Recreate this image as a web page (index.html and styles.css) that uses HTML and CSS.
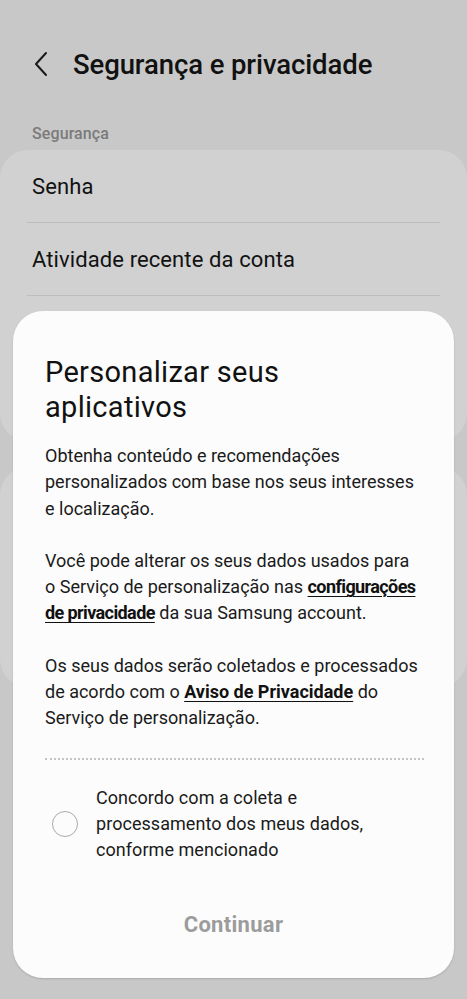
FILE: index.html
```html
<!DOCTYPE html>
<html lang="pt-BR">
<head>
    <meta charset="UTF-8">
    <meta name="viewport" content="width=device-width, initial-scale=1.0">
    <title>Segurança e privacidade</title>
    <link rel="stylesheet" href="styles.css">
</head>
<body>
    <div class="screen">
        <header class="app-bar">
            <svg class="back" width="14" height="26" viewBox="0 0 14 26">
                <path d="M12 2 L2 13 L12 24" fill="none" stroke="#1a1a1a" stroke-width="2" stroke-linecap="round" stroke-linejoin="round"/>
            </svg>
            <h1>Segurança e privacidade</h1>
        </header>

        <div class="section-label">Segurança</div>
        <div class="card">
            <div class="row">Senha</div>
            <div class="row">Atividade recente da conta</div>
            <div class="row">Verificação em duas etapas</div>
            <div class="row">Dispositivos</div>
        </div>
        <div class="card card-second">
            <div class="row">Personalização</div>
            <div class="row">Dados</div>
        </div>

        <div class="sheet">
            <h2>Personalizar seus aplicativos</h2>
            <p>Obtenha conteúdo e recomendações personalizados com base nos seus interesses e localização.</p>
            <p>Você pode alterar os seus dados usados para o Serviço de personalização nas <a href="#">configurações de privacidade</a> da sua Samsung account.</p>
            <p>Os seus dados serão coletados e processados de acordo com o <a href="#" class="wide">Aviso de Privacidade</a> do Serviço de personalização.</p>
            <div class="dots"></div>
            <label class="agree">
                <span class="radio"></span>
                <span class="agree-text">Concordo com a coleta e processamento dos meus dados, conforme mencionado</span>
            </label>
            <button class="continue" type="button">Continuar</button>
        </div>
    </div>
</body>
</html>
```

FILE: styles.css
```css
body {
    margin: 0;
    background-color: #c8c8c8;
    font-family: Roboto, "Noto Sans", sans-serif;
    color: #111;
}

.screen {
    position: relative;
    width: 467px;
    height: 999px;
    overflow: hidden;
}

.app-bar {
    display: flex;
    align-items: center;
    gap: 25px;
    padding: 49px 0 0 34px;
    height: 30px;
}

.back {
    display: block;
}

h1 {
    margin: 0;
    font-size: 27.5px;
    font-weight: 500;
    letter-spacing: -0.1px;
    color: #111;
}

.section-label {
    margin: 45px 0 0 32px;
    font-size: 16px;
    font-weight: 500;
    letter-spacing: 0.1px;
    color: #7b7b7b;
}

.card {
    margin: 7px 0 0 0;
    background-color: #d1d1d1;
    border-radius: 28px;
    padding: 0 27px;
}

.card-second {
    margin-top: 26px;
    height: 220px;
}

.row {
    height: 72px;
    display: flex;
    align-items: center;
    padding-left: 5px;
    font-size: 22px;
    letter-spacing: 0.1px;
    color: #121212;
    border-bottom: 1px solid #bdbdbd;
}

.row:last-child {
    border-bottom: none;
}

.sheet {
    position: absolute;
    left: 13px;
    top: 311px;
    width: 441px;
    height: 667px;
    box-sizing: border-box;
    padding: 44px 24px 0 32px;
    background-color: #fcfcfc;
    border-radius: 30px;
    box-shadow: 0 1px 2px rgba(0, 0, 0, 0.15);
}

h2 {
    margin: 0 0 18px 0;
    max-width: 330px;
    font-size: 29px;
    font-weight: 400;
    line-height: 35px;
    letter-spacing: 0.3px;
    color: #111;
}

p {
    margin: 0 0 26px 0;
    max-width: 377px;
    font-size: 18px;
    line-height: 26.3px;
    letter-spacing: 0;
    color: #1a1a1a;
}

p a {
    color: #111;
    font-weight: 700;
    letter-spacing: -0.6px;
    text-decoration: underline;
    text-underline-offset: 3px;
}

p a.wide {
    letter-spacing: 0;
}

.dots {
    margin: 16px 6px 0 0;
    border-top: 2px dotted #c4c4c4;
    height: 0;
}

.agree {
    display: flex;
    align-items: center;
    gap: 18px;
    margin-top: 25px;
    padding-left: 7px;
}

.radio {
    flex: none;
    width: 24px;
    height: 24px;
    border: 1.5px solid #a9a9a9;
    border-radius: 50%;
}

.agree-text {
    max-width: 295px;
    font-size: 18px;
    line-height: 26px;
    letter-spacing: 0.05px;
    color: #1a1a1a;
}

.continue {
    display: block;
    margin: 49px auto 0 auto;
    border: none;
    background: none;
    font-family: Roboto, "Noto Sans", sans-serif;
    font-size: 22px;
    font-weight: 700;
    letter-spacing: 0.3px;
    color: #9c9c9c;
    padding: 0;
    position: relative;
    left: -4px;
}
```
